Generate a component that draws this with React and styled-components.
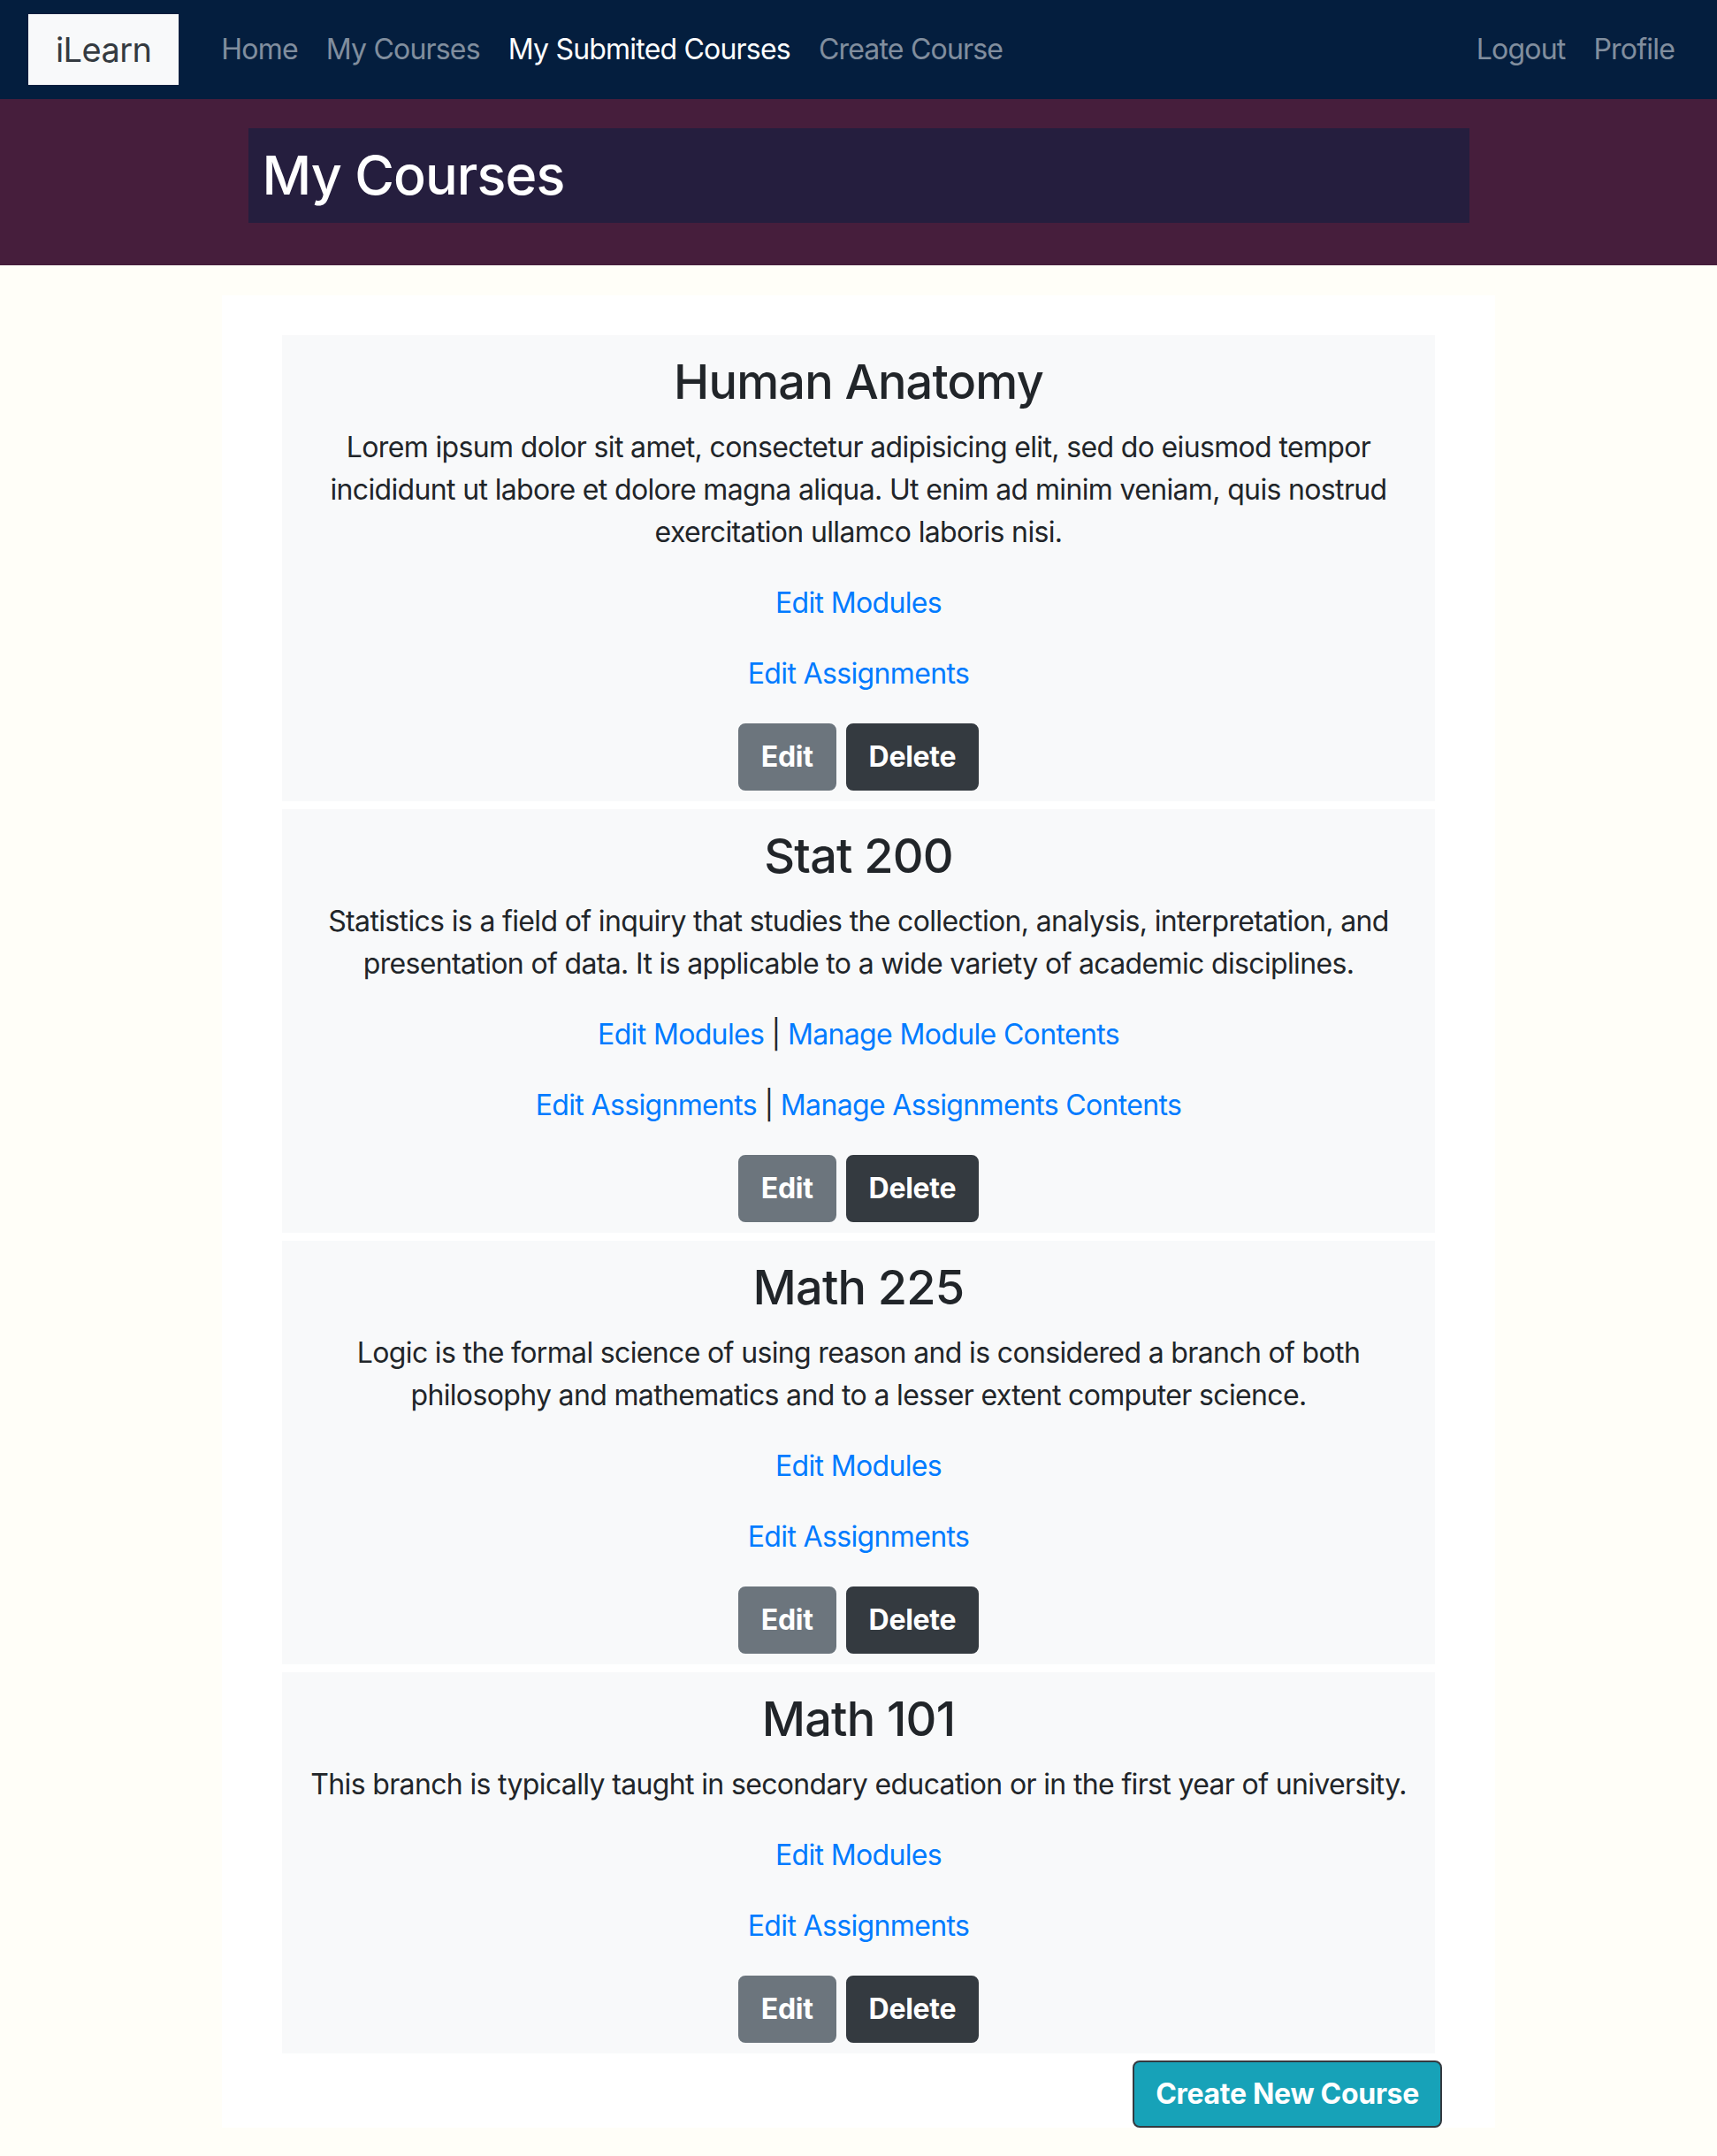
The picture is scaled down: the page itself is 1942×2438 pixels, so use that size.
import React from 'react';
import styled, { createGlobalStyle } from 'styled-components';

const GlobalStyle = createGlobalStyle`
  * { box-sizing: border-box; }
  body {
    margin: 0;
    background: #fffef8;
    font-family: Inter, "Liberation Sans", Arial, sans-serif;
    font-size: 32px;
    line-height: 1.5;
    letter-spacing: -0.65px;
    color: #212529;
  }
`;

const Navbar = styled.nav`
  display: flex;
  align-items: center;
  height: 112px;
  padding: 16px 32px;
  background: #041e3e;
`;

const Brand = styled.a`
  display: block;
  margin-right: 32px;
  padding: 10px 31px;
  background: #f8f9fa;
  color: #343a40;
  font-size: 38px;
  line-height: 60px;
  letter-spacing: -0.6px;
  text-decoration: none;
`;

const NavList = styled.div`
  display: flex;
  align-items: center;
  flex: ${(p) => (p.$grow ? 1 : 'none')};
`;

const NavLink = styled.a`
  padding: 8px 16px;
  color: ${(p) => (p.$active ? '#ffffff' : 'rgba(255, 255, 255, 0.5)')};
  font-size: 32px;
  line-height: 48px;
  letter-spacing: -0.8px;
  text-decoration: none;
`;

const Banner = styled.header`
  background: #461e3c;
  padding: 33px 0 48px;
`;

const BannerBox = styled.div`
  width: 1381px;
  margin: 0 auto;
  height: 107px;
  padding: 0 16px;
  display: flex;
  align-items: center;
  background: #251e3e;
`;

const PageTitle = styled.h1`
  margin: 0;
  color: #ffffff;
  font-size: 61px;
  font-weight: 500;
  line-height: 1.2;
  letter-spacing: -0.9px;
`;

const Container = styled.main`
  width: 1440px;
  margin: 34px auto 0;
  padding-top: 45px;
  background: #ffffff;
`;

const CourseList = styled.div`
  display: flex;
  flex-direction: column;
  gap: 9px;
  margin: 0 68px;
`;

const Card = styled.section`
  background: #f8f9fa;
  padding: 14px 20px 12px;
  text-align: center;
`;

const CourseTitle = styled.h2`
  margin: 0 0 12px;
  font-size: 54px;
  font-weight: 500;
  line-height: 77px;
  letter-spacing: -0.8px;
`;

const Text = styled.p`
  margin: 0 0 32px;
`;

const Link = styled.a`
  color: #007bff;
  text-decoration: none;
`;

const Actions = styled.div`
  display: flex;
  justify-content: center;
  gap: 11px;
`;

const Button = styled.button`
  padding: 12px 24px;
  border: 2px solid ${(p) => p.$border || p.$bg};
  border-radius: 8px;
  background: ${(p) => p.$bg};
  color: #ffffff;
  font-family: inherit;
  font-size: 32px;
  font-weight: 700;
  line-height: 48px;
  letter-spacing: -0.3px;
`;

const ButtonRow = styled.div`
  display: flex;
  justify-content: flex-end;
  padding: 8px 60px 0 0;
`;

const courses = [
  {
    title: 'Human Anatomy',
    text: 'Lorem ipsum dolor sit amet, consectetur adipisicing elit, sed do eiusmod tempor incididunt ut labore et dolore magna aliqua. Ut enim ad minim veniam, quis nostrud exercitation ullamco laboris nisi.',
    manage: false,
  },
  {
    title: 'Stat 200',
    text: 'Statistics is a field of inquiry that studies the collection, analysis, interpretation, and presentation of data. It is applicable to a wide variety of academic disciplines.',
    manage: true,
  },
  {
    title: 'Math 225',
    text: 'Logic is the formal science of using reason and is considered a branch of both philosophy and mathematics and to a lesser extent computer science.',
    manage: false,
  },
  {
    title: 'Math 101',
    text: 'This branch is typically taught in secondary education or in the first year of university.',
    manage: false,
  },
];

const App = () => {
  return (
    <>
      <GlobalStyle />
      <Navbar>
        <Brand href="#">iLearn</Brand>
        <NavList $grow>
          <NavLink href="#">Home</NavLink>
          <NavLink href="#">My Courses</NavLink>
          <NavLink href="#" $active>My Submited Courses</NavLink>
          <NavLink href="#">Create Course</NavLink>
        </NavList>
        <NavList>
          <NavLink href="#">Logout</NavLink>
          <NavLink href="#">Profile</NavLink>
        </NavList>
      </Navbar>
      <Banner>
        <BannerBox>
          <PageTitle>My Courses</PageTitle>
        </BannerBox>
      </Banner>
      <Container>
        <CourseList>
          {courses.map((c) => (
            <Card key={c.title}>
              <CourseTitle>{c.title}</CourseTitle>
              <Text>{c.text}</Text>
              <Text>
                <Link href="#">Edit Modules</Link>
                {c.manage && (
                  <>
                    {' | '}
                    <Link href="#">Manage Module Contents</Link>
                  </>
                )}
              </Text>
              <Text>
                <Link href="#">Edit Assignments</Link>
                {c.manage && (
                  <>
                    {' | '}
                    <Link href="#">Manage Assignments Contents</Link>
                  </>
                )}
              </Text>
              <Actions>
                <Button $bg="#6c757d">Edit</Button>
                <Button $bg="#343a40">Delete</Button>
              </Actions>
            </Card>
          ))}
        </CourseList>
        <ButtonRow>
          <Button $bg="#17a2b8" $border="#343a40">Create New Course</Button>
        </ButtonRow>
      </Container>
    </>
  );
};

export default App;
